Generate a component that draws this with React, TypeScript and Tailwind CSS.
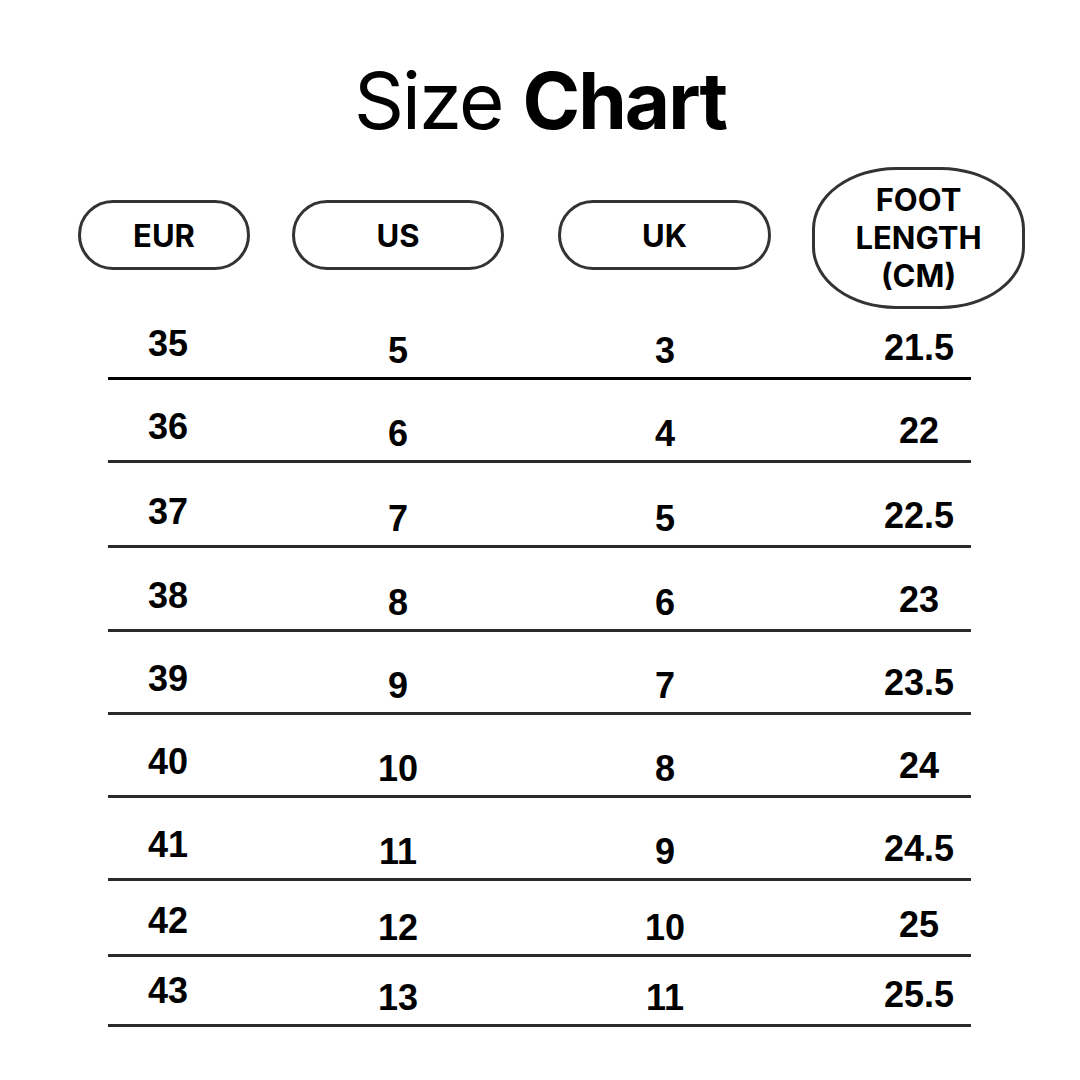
import React from "react";

const rows = [
  { eur: "35", us: "5", uk: "3", ft: "21.5", h: "h-[71px]", line: "border-black" },
  { eur: "36", us: "6", uk: "4", ft: "22", h: "h-[83px]", line: "border-[#2a2a2a]" },
  { eur: "37", us: "7", uk: "5", ft: "22.5", h: "h-[85px]", line: "border-[#2a2a2a]" },
  { eur: "38", us: "8", uk: "6", ft: "23", h: "h-[84px]", line: "border-[#2a2a2a]" },
  { eur: "39", us: "9", uk: "7", ft: "23.5", h: "h-[83px]", line: "border-[#2a2a2a]" },
  { eur: "40", us: "10", uk: "8", ft: "24", h: "h-[83px]", line: "border-[#2a2a2a]" },
  { eur: "41", us: "11", uk: "9", ft: "24.5", h: "h-[83px]", line: "border-[#2a2a2a]" },
  { eur: "42", us: "12", uk: "10", ft: "25", h: "h-[76px]", line: "border-[#2a2a2a]" },
  { eur: "43", us: "13", uk: "11", ft: "25.5", h: "h-[70px]", line: "border-[#2a2a2a]" },
];

const num = "font-['Liberation_Sans',Arial,sans-serif] font-bold text-[36px] leading-none text-black";

export default function App() {
  return (
    <div className="w-[1080px] h-[1080px] bg-white flex flex-col overflow-hidden font-['Inter',sans-serif]">
      <h1 className="mt-[62px] text-center text-[78px] leading-none text-black tracking-[-0.025em]">
        <span className="font-normal">Size </span>
        <span className="font-bold">Chart</span>
      </h1>

      <div className="mt-[27px] flex h-[142px] items-start">
        <div className="ml-[78px] mt-[33px] w-[172px] h-[70px] rounded-full border-[3px] border-[#333] flex items-center justify-center">
          <span className="text-[31px] font-bold leading-none text-black">EUR</span>
        </div>
        <div className="ml-[42px] mt-[33px] w-[212px] h-[70px] rounded-full border-[3px] border-[#333] flex items-center justify-center">
          <span className="text-[31px] font-bold leading-none text-black">US</span>
        </div>
        <div className="ml-[54px] mt-[33px] w-[213px] h-[70px] rounded-full border-[3px] border-[#333] flex items-center justify-center">
          <span className="text-[31px] font-bold leading-none text-black">UK</span>
        </div>
        <div className="ml-[41px] w-[213px] h-[142px] rounded-[84px/62px] border-[3px] border-[#333] flex items-center justify-center">
          <span className="text-[31px] font-bold leading-[38px] text-black text-center">
            FOOT
            <br />
            LENGTH
            <br />
            (CM)
          </span>
        </div>
      </div>

      <div className="ml-[108px] w-[863px] flex flex-col">
        {rows.map((r) => (
          <div key={r.eur} className={`flex items-end border-b-[3px] ${r.line} ${r.h}`}>
            <div className={`w-[120px] shrink-0 text-center pb-[15px] ${num}`}>{r.eur}</div>
            <div className={`ml-[110px] w-[120px] shrink-0 text-center pb-[8px] ${num}`}>{r.us}</div>
            <div className={`ml-[147px] w-[120px] shrink-0 text-center pb-[8px] ${num}`}>{r.uk}</div>
            <div className={`ml-[134px] w-[120px] shrink-0 text-center pb-[11px] ${num}`}>{r.ft}</div>
          </div>
        ))}
      </div>
    </div>
  );
}
